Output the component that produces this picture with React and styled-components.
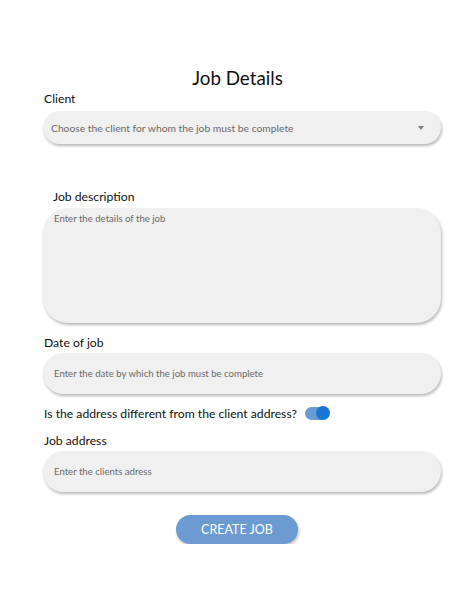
import React from "react";
import styled, { createGlobalStyle } from "styled-components";

const Global = createGlobalStyle`
  html, body { margin: 0; padding: 0; background: #ffffff; }
  body { font-family: Lato, "Open Sans", sans-serif; color: #111; }
`;

const Page = styled.div`
  width: 473px;
  padding-top: 65px;
  display: flex;
  flex-direction: column;
`;

const Title = styled.h1`
  margin: 0;
  text-align: center;
  font-size: 18.8px;
  font-weight: 400;
  line-height: 25px;
  color: #111;
  padding-left: 2px;
`;

const Form = styled.form`
  margin-left: 43px;
  width: 398px;
  display: flex;
  flex-direction: column;
`;

const Label = styled.label`
  display: block;
  font-size: 12.2px;
  line-height: 14px;
  color: #111;
  margin-top: ${(p) => p.$top || 0}px;
  margin-bottom: ${(p) => p.$bottom ?? 3}px;
  padding-left: ${(p) => p.$indent || 1}px;
`;

const Field = styled.div`
  box-sizing: border-box;
  width: 398px;
  height: ${(p) => p.$h}px;
  background: #f0f0f0;
  border-radius: ${(p) => p.$r}px;
  box-shadow: 1px 2px 3px rgba(0, 0, 0, 0.28);
  display: flex;
  align-items: ${(p) => (p.$top ? "flex-start" : "center")};
  padding: ${(p) => (p.$top ? "5px 11px" : `0 11px 0 ${p.$pl || 11}px`)};
  font-size: ${(p) => p.$fs || 9.6}px;
  line-height: 12px;
  color: #6a6a6a;
`;

const Placeholder = styled.span`
  flex: 1;
`;

const Caret = styled.span`
  width: 0;
  height: 0;
  border-left: 3.5px solid transparent;
  border-right: 3.5px solid transparent;
  border-top: 4px solid #7a7a7a;
  margin-right: 6px;
`;

const ToggleRow = styled.div`
  display: flex;
  align-items: center;
  gap: 8px;
  height: 14px;
  margin-top: 12px;
  font-size: 12.2px;
  color: #111;
  padding-left: 1px;
`;

const Track = styled.span`
  position: relative;
  width: 23px;
  height: 13px;
  border-radius: 7px;
  background: #6a9bd3;
  display: inline-block;
`;

const Thumb = styled.span`
  position: absolute;
  right: -2px;
  top: -0.5px;
  width: 14px;
  height: 14px;
  border-radius: 50%;
  background: #1976d2;
`;

const ButtonRow = styled.div`
  display: flex;
  justify-content: center;
  margin-top: 23px;
  margin-left: -10px;
`;

const Button = styled.button`
  width: 122px;
  height: 29px;
  border: none;
  border-radius: 15px;
  background: #6b9bd1;
  color: #ffffff;
  font-family: Lato, sans-serif;
  font-size: 12.5px;
  box-shadow: 1px 2px 3px rgba(0, 0, 0, 0.25);
  padding: 0;
`;

export default function App() {
  return (
    <>
      <Global />
      <Page>
        <Title>Job Details</Title>
        <Form>
          <Label $top={2} $bottom={5}>Client</Label>
          <Field $h={33} $r={17} $fs={10.3} $pl={8}>
            <Placeholder>Choose the client for whom the job must be complete</Placeholder>
            <Caret />
          </Field>
          <Label $top={46} $bottom={4} $indent={10}>Job description</Label>
          <Field $h={115} $r={25} $top>
            <Placeholder>Enter the details of the job</Placeholder>
          </Field>
          <Label $top={13}>Date of job</Label>
          <Field $h={41} $r={21}>
            <Placeholder>Enter the date by which the job must be complete</Placeholder>
          </Field>
          <ToggleRow>
            <span>Is the address different from the client address?</span>
            <Track>
              <Thumb />
            </Track>
          </ToggleRow>
          <Label $top={14}>Job address</Label>
          <Field $h={41} $r={21}>
            <Placeholder>Enter the clients adress</Placeholder>
          </Field>
          <ButtonRow>
            <Button type="button">CREATE JOB</Button>
          </ButtonRow>
        </Form>
      </Page>
    </>
  );
}
